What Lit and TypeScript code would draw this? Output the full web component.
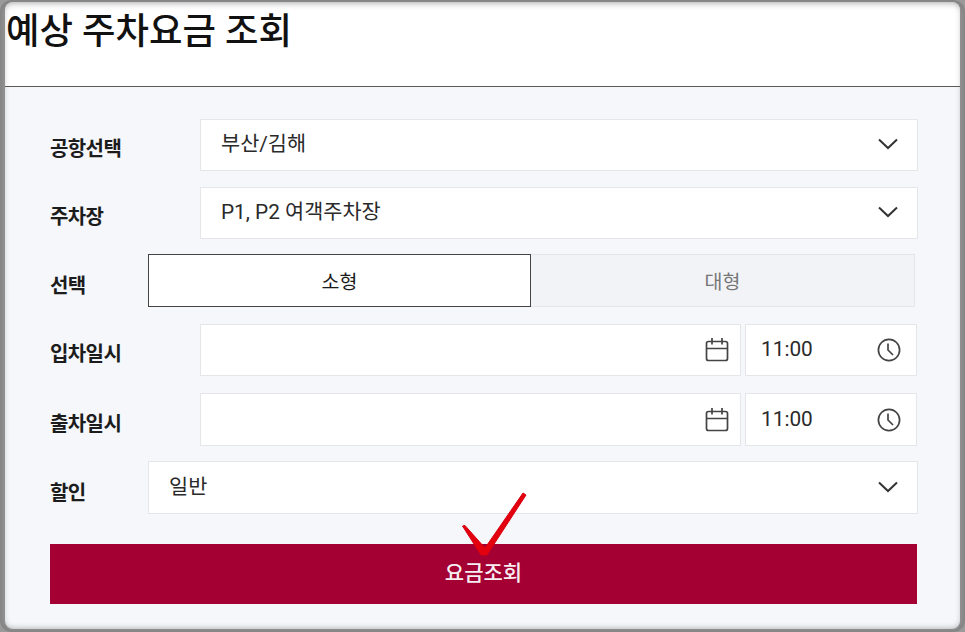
import { LitElement, html, css, svg } from "lit";
import { customElement } from "lit/decorators.js";

const chevron = html`<svg class="chev" width="22" height="14" viewBox="0 0 22 14"><path d="M2 2.5 L11 11 L20 2.5" fill="none" stroke="#333" stroke-width="2"/></svg>`;
const cal = html`<svg class="ic" width="26" height="28" viewBox="0 0 26 28"><g fill="none" stroke="#444" stroke-width="1.7"><rect x="2.5" y="5.5" width="21" height="19" rx="2"/><path d="M2.5 12.5H23.5M8 2V8.5M18 2V8.5"/></g></svg>`;
const clock = html`<svg class="ic" width="26" height="26" viewBox="0 0 26 26"><g fill="none" stroke="#444" stroke-width="1.7"><circle cx="13" cy="13" r="10.6"/><path d="M12 6.5V13L17 18"/></g></svg>`;
const check = svg`<path d="M462.5 526 L465 525.5 L485 548 L523 493 L526 495 L487 555 L481 555 Z" fill="#e3000f" stroke="#d8000f" stroke-width="1" stroke-linejoin="round"/>`;

@customElement("app-root")
export class AppRoot extends LitElement {
  static styles = css`
    :host { display: block; position: relative; width: 965px; height: 632px; overflow: hidden; background: #9a9a9a;
      font-family: Roboto, "Noto Sans CJK KR", sans-serif; color: #222; }
    .card { box-sizing: border-box; margin: 2px 5px 0 5px; height: 627px; background: #f5f7fa; border-radius: 8px; overflow: hidden; display: flex; flex-direction: column; }
    .head { box-sizing: border-box; height: 85px; flex: none; background: #fff; border-bottom: 1px solid #5a5a5a; }
    h1 { margin: 0; padding: 4px 0 0 1px; font-size: 36.4px; line-height: 52px; font-weight: 500; color: #111; }
    .form { padding: 32px 42px 0 45px; display: flex; flex-direction: column; }
    .row { display: flex; align-items: stretch; }
    .r1, .r2 { height: 52px; }
    .r2 { margin-top: 16px; }
    .r3 { height: 53px; margin-top: 15px; }
    .r4 { height: 52px; margin-top: 17px; }
    .r5 { height: 53px; margin-top: 17px; }
    .r6 { height: 53px; margin-top: 15px; }
    .label { flex: none; width: 150px; padding-top: 5px; box-sizing: border-box; display: flex; align-items: center; font-size: 20px; font-weight: 700; color: #1c1c1c; letter-spacing: -0.6px; }
    .short { width: 98px; padding-top: 7px; }
    .field { flex: 1; box-sizing: border-box; background: #fff; border: 1px solid #e4e6ea; display: flex; align-items: center; justify-content: space-between; padding: 0 18px 0 20px; font-size: 20.8px; color: #2a2a2a; }
    .value { position: relative; top: -3px; }
    .date { flex: none; width: 541px; padding-right: 10px; }
    .time { flex: none; width: 172px; margin: 0 1px 0 4px; padding: 0 14px 0 15px; font-size: 20.8px; }
    .clocktext { position: relative; top: -1px; }
    .seg { flex: none; width: 767px; display: flex; }
    .opt { box-sizing: border-box; display: flex; align-items: center; justify-content: center; font-size: 19.5px; }
    .on { width: 383px; background: #fff; border: 1px solid #444; color: #1a1a1a; }
    .off { width: 384px; background: #f1f3f6; border: 1px solid #e3e5e9; border-left: none; color: #767676; }
    .chev { position: relative; top: -1px; }
    .ic { display: block; }
    .btn { box-sizing: border-box; margin-top: 30px; height: 60px; width: 867px; border: none; padding: 0 0 6px; background: #a50034; color: #f6eef1; font: inherit; font-size: 21px; font-weight: 500; display: flex; align-items: center; justify-content: center; }
    .frame { position: absolute; inset: 0; pointer-events: none; border-radius: 12px; box-shadow: inset 0 0 6px 3px rgba(110,110,110,.6); }
    .mark { position: absolute; inset: 0; pointer-events: none; }
  `;

  render() {
    return html`
      <div class="card">
        <div class="head"><h1>예상 주차요금 조회</h1></div>
        <div class="form">
          <div class="row r1"><div class="label">공항선택</div><div class="field"><span class="value">부산/김해</span>${chevron}</div></div>
          <div class="row r2"><div class="label">주차장</div><div class="field"><span class="value">P1, P2 여객주차장</span>${chevron}</div></div>
          <div class="row r3"><div class="label short">선택</div>
            <div class="seg"><div class="opt on">소형</div><div class="opt off">대형</div></div></div>
          <div class="row r4"><div class="label">입차일시</div><div class="field date"><span></span>${cal}</div><div class="field time"><span class="clocktext">11:00</span>${clock}</div></div>
          <div class="row r5"><div class="label">출차일시</div><div class="field date"><span></span>${cal}</div><div class="field time"><span class="clocktext">11:00</span>${clock}</div></div>
          <div class="row r6"><div class="label short">할인</div><div class="field"><span class="value">일반</span>${chevron}</div></div>
          <button class="btn">요금조회</button>
        </div>
      </div>
      <div class="frame"></div>
      <svg class="mark" width="965" height="632" viewBox="0 0 965 632">${check}</svg>
    `;
  }
}
